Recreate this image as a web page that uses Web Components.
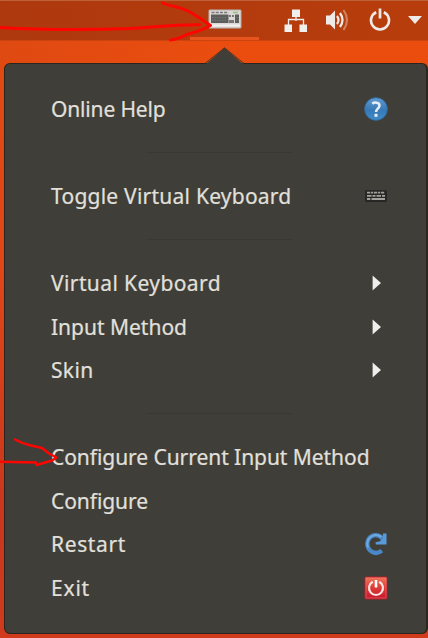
<!DOCTYPE html>
<html lang="en"><head><meta charset="utf-8"><title>Input method menu</title>
<style>html,body{margin:0;width:428px;height:638px;overflow:hidden}</style></head>
<body><desktop-view></desktop-view>
<script>
const define=(name,html,ready)=>customElements.define(name,class extends HTMLElement{
  connectedCallback(){
    if(this.shadowRoot)return;
    const r=this.attachShadow({mode:'open'});
    r.innerHTML=html;
    if(ready)ready.call(this,r);
  }
});
const icons={
keyboard:`<svg width="34" height="20" viewBox="0 0 34 20"><rect x=".8" y=".8" width="32.4" height="18.4" rx="1" fill="#dcd8d5" stroke="#a98f84" stroke-width=".8"/><path d="M3.5 3.5h17" stroke="#777" stroke-width="1.6" stroke-dasharray="3 1.2"/><path d="M25 3.5h5" stroke="#8fc77c" stroke-width="1.5"/><path d="M3 5.500h17.500v8.500H3zM27 5.500h4V14h-4z" fill="#5c5e5c"/><path d="M21 6h2v2h-2zM24 6h2v2h-2zM21 11h5v3h-5z" fill="#777"/><path d="M4 8.500h15M4 11.300h15M28 8.500h3M28 11.300h3" stroke="#858784" stroke-width=".6" stroke-dasharray="1.5 1"/><path d="M2 16.500h30" stroke="#f4f2f0" stroke-width="2"/></svg>`,
network:`<svg width="24" height="24" viewBox="0 0 24 24"><path d="M12 8v5M4.500 17v-5.500h15V17" fill="none" stroke="#eeeae8" stroke-width="1.3"/><path d="M8 1.500h8V9H8zM.5 16.500H8V24H.5zM15.500 16.500H23V24h-7.500z" fill="#f1efed"/></svg>`,
sound:`<svg width="24" height="22" viewBox="0 0 24 22"><path d="M0 6.500h4l5-5v19l-5-5H0z" fill="#eeeae8"/><path d="M11 7q3 4 0 8" fill="none" stroke="#eeeae8" stroke-width="2.200"/><path d="M14 4q5 7 0 14" fill="none" stroke="#eeeae8" stroke-width="2.300"/><path d="M17.500 1q7 10 0 20" fill="none" stroke="#cf835f" stroke-width="2.100"/></svg>`,
power:`<svg width="22" height="23" viewBox="0 0 22 23"><path d="M7.200 4.300a9 9 0 1 0 7.600 0" fill="none" stroke="#eeeae8" stroke-width="2.600"/><path d="M11 .5v10" stroke="#eeeae8" stroke-width="2.700"/></svg>`,
caret:`<svg width="14" height="8" viewBox="0 0 14 8"><path d="M0 0h14L7 8z" fill="#eeeae8"/></svg>`,
help:`<svg width="24" height="24" viewBox="0 0 24 24"><defs><linearGradient id="g" x2="0" y2="1"><stop stop-color="#639bd0"/><stop offset=".55" stop-color="#3679b6"/><stop offset="1" stop-color="#3f8cc7"/></linearGradient></defs><circle cx="12" cy="12" r="11.300" fill="url(#g)" stroke="#326fa9" stroke-width="1"/><path d="M8.300 6.700C10 5.200 15.500 4.800 15.500 8.500c0 3-3.500 3.200-3.500 6.500" fill="none" stroke="#e6eef6" stroke-width="2.500"/><path d="M10.500 16.800h3v3h-3z" fill="#e6eef6"/></svg>`,
keys:`<svg width="22" height="12" viewBox="0 0 22 12"><rect width="22" height="12" rx="1.500" fill="#282725"/><path d="M2 2.700h18" stroke="#a3a29d" stroke-width="1.800" stroke-dasharray="3.300 .8 2 .8"/><path d="M2 5.800h18" stroke="#a3a29d" stroke-width="1.700" stroke-dasharray="4.500 1 3 1"/><path d="M2 9h3.300M6.500 9H20" stroke="#a3a29d" stroke-width="1.900"/></svg>`,
arrow:`<svg width="24" height="16" viewBox="0 0 24 16"><path d="M8.600.5L17 8l-8.400 7.500z" fill="#eeeeec"/></svg>`,
restart:`<svg width="24" height="24" viewBox="0 0 24 24"><path d="M18.500 6.500C14.500 1.800 8 2.200 5 6.500 1.500 12 3.800 18 9 20.300c2.800 1.200 6.200.6 8.800-1.600" fill="none" stroke="#4a87c6" stroke-width="4.300"/><path d="M22.500 1.500v11H11.800l-.3-2.300 4.500-1L19 5.500V1.500z" fill="#5a99d8"/><path d="M17.500 5C13.500 2 8 2.500 5 6.500 3 9.500 3 13 4 15.500" fill="none" stroke="#6ea9e0" stroke-width="2"/></svg>`,
exit:`<svg width="24" height="24" viewBox="0 0 24 24"><defs><linearGradient id="g" x2="0" y2="1"><stop stop-color="#ef765b"/><stop offset=".5" stop-color="#db3b36"/><stop offset="1" stop-color="#c71530"/></linearGradient></defs><rect x="1" y="1" width="22" height="22" rx="1.200" fill="url(#g)" stroke="#b51b2b"/><rect x="2" y="2" width="20" height="20" fill="none" stroke="#f07a69" stroke-opacity=".55"/><path d="M8.800 5.800a7 7 0 1 0 6.400 0" fill="none" stroke="#fbe5e2" stroke-width="2.100"/><path d="M12 4v7.500" stroke="#fff" stroke-width="2.600"/></svg>`
};
define('ui-icon','<style>:host{display:block;flex:none}svg{display:block}</style><span></span>',function(r){r.querySelector('span').innerHTML=icons[this.getAttribute('name')]});

define('top-bar',`<style>:host{display:block;height:41px;box-sizing:border-box;background:linear-gradient(90deg,#ae390e,#b83d0c);border-top:1px solid #bd6238;border-bottom:1px solid #cb430e}
.bar{display:flex;height:39px;align-items:flex-start;padding-left:190px}
.active{width:69px;height:39px;box-sizing:border-box;border-bottom:3px solid #e9531e;display:flex;justify-content:center;padding-top:8px;background:#b43b0d}
.n{margin:7px 0 0 25px}.s{margin:8px 0 0 18px;width:24px}.p{margin:7px 0 0 19px}.c{margin:15px 0 0 17px}
</style><div class="bar"><div class="active"><ui-icon name="keyboard"></ui-icon></div><ui-icon class="n" name="network"></ui-icon><ui-icon class="s" name="sound"></ui-icon><ui-icon class="p" name="power"></ui-icon><ui-icon class="c" name="caret"></ui-icon></div>`);

// "fit" is the label's advance width; the remainder is spread over its letters.
define('menu-item',`<style>:host{display:flex;height:43.55px;align-items:center;justify-content:space-between;padding:0 38px 0 46px}
span{white-space:nowrap;font:21px/28px "Noto Sans","Open Sans",sans-serif;color:#e2e0dc;-webkit-text-stroke:.2px #e2e0dc}</style><span><slot></slot></span>`,function(r){
  const s=r.querySelector('span'),fit=+this.getAttribute('fit');
  s.style.letterSpacing=(fit-s.getBoundingClientRect().width)/this.textContent.length+'px';
  const n=this.getAttribute('icon');
  if(n){const i=document.createElement('ui-icon');i.setAttribute('name',n);if(n==='keys')i.style.marginRight='1px';r.append(i)}
});
define('menu-separator','<style>:host{display:flex;height:43.55px;align-items:center;justify-content:center}i{width:146px;height:1px;background:#393833;margin-left:7px}</style><i></i>');
define('popup-menu',`<style>:host{display:block;margin:22px 0 0 4px;width:424px;height:571px;box-sizing:border-box;position:relative;border:1px solid #2b251f;border-right-width:2px;border-radius:6px;background:#403e38;padding-top:23px}
svg{position:absolute;left:184px;top:-17px}</style><svg width="70" height="18" viewBox="0 0 70 18"><path d="M16 18L35.500 .8 55 18z" fill="#403e38"/><path d="M16 16.500L35.500 .8 55 16.500" fill="none" stroke="#55341f" stroke-width="1"/></svg><slot></slot>`);
define('red-marks',`<style>:host{position:absolute;inset:0;pointer-events:none}</style><svg width="428" height="638" fill="none" stroke="#fd0500" stroke-width="2.900" stroke-linecap="round" stroke-linejoin="round"><path d="M0 27.500Q60 31 130 28.500C155 27 175 24.500 200 24.800M162.500 3C173 7 180 6.500 190 12Q200 18 210.500 25.500C201 31 195 32 187 34.500Q179 39 170.500 40"/><path stroke-width="2.500" d="M0 461.700l36 .7M15 439.500Q23 444 31 445.500L42 448 49 453.500 56.500 457.500 52 460.500 36.500 465"/></svg>`);
define('desktop-view',`<style>:host{display:block;position:relative;width:428px;height:638px;background:linear-gradient(90deg,transparent,rgba(236,77,14,.9) 55%) 0 0/100% 64px no-repeat,linear-gradient(#df4a12 10%,#df4718 42%,#c9371d 80%,#d03b1c)}
</style><top-bar></top-bar><popup-menu>
<menu-item fit="114.500" icon="help">Online Help</menu-item><menu-separator></menu-separator>
<menu-item fit="240.500" icon="keys">Toggle Virtual Keyboard</menu-item><menu-separator></menu-separator>
<menu-item fit="170" icon="arrow">Virtual Keyboard</menu-item><menu-item fit="136" icon="arrow">Input Method</menu-item><menu-item fit="42.500" icon="arrow">Skin</menu-item><menu-separator></menu-separator>
<menu-item fit="318.500">Configure Current Input Method</menu-item><menu-item fit="97">Configure</menu-item><menu-item fit="75" icon="restart">Restart</menu-item><menu-item fit="39" icon="exit">Exit</menu-item>
</popup-menu><red-marks></red-marks>`);
</script></body></html>
